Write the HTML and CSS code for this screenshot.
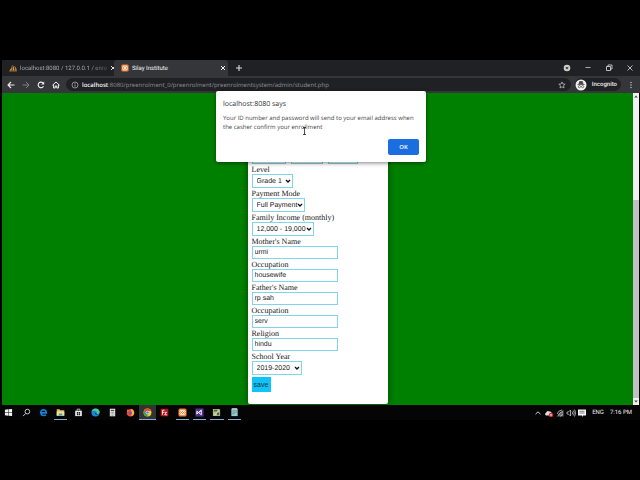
FILE: index.html
```html
<!DOCTYPE html>
<html lang="en">
<head>
<meta charset="utf-8">
<title>Silay Institute</title>
<link rel="stylesheet" href="styles.css">
</head>
<body>
<svg class="defs" aria-hidden="true">
  <symbol id="chev" viewBox="0 0 6 6"><path d="M1 2l2 2 2-2" fill="none" stroke="#111" stroke-width="1.3"/></symbol>
  <symbol id="xampp" viewBox="0 0 10 10"><rect x=".5" y=".5" width="9" height="9" rx="1.8" fill="#f07c30"/><path d="M3 3l4 4M7 3L3 7M2.6 5A1.4 1.4 0 0 1 3 2.6h4A1.4 1.4 0 0 1 7.4 5 1.4 1.4 0 0 1 7 7.4H3A1.4 1.4 0 0 1 2.6 5z" fill="none" stroke="#fff" stroke-width="1"/></symbol>
</svg>
<header class="tabs">
  <div class="tab">
    <svg class="fav" viewBox="0 0 10 10"><path d="M.5 8Q3.500 6 3.500 2V8zM4.500 8V1Q7 4 6.500 8z" fill="#e59a37"/><path d="M7.200 8Q8 5 7.200 3 9 5 9.500 8zM0 9q5-1 10 0" fill="#9b7a55" stroke="#b88a4c" stroke-width=".6"/></svg>
    <span class="name fade">localhost:8080 / 127.0.0.1 / enro</span>
    <button class="close" aria-label="Close tab"><svg viewBox="0 0 6 6"><path d="M1 1l4 4M5 1L1 5" stroke="#ddd"/></svg></button>
  </div>
  <div class="tab active">
    <svg class="fav"><use href="#xampp"/></svg>
    <span class="name">Silay Institute</span>
    <button class="close" aria-label="Close tab"><svg viewBox="0 0 6 6"><path d="M1 1l4 4M5 1L1 5" stroke="#eee"/></svg></button>
  </div>
  <button class="new" aria-label="New tab"><svg viewBox="0 0 8 8"><path d="M4 1v6M1 4h6" stroke="#ddd" stroke-width="1.100"/></svg></button>
  <div class="winctl">
    <button aria-label="Search tabs"><svg viewBox="0 0 8 8"><circle cx="4" cy="4" r="3.300" fill="#ccc"/><path d="M2.400 3.200h3.200L4 5.400z" fill="#222"/></svg></button>
    <button aria-label="Minimise"><svg viewBox="0 0 8 8"><path d="M1.500 3.500h5" stroke="#ccc" stroke-width=".8"/></svg></button>
    <button aria-label="Restore"><svg viewBox="0 0 8 8"><path d="M1.500 2.500h4v4h-4zM3 2.500V1h4v4H5.500" fill="none" stroke="#ddd" stroke-width=".8"/></svg></button>
    <button aria-label="Close"><svg viewBox="0 0 8 8"><path d="M1.500 1.500l5 5M6.500 1.500l-5 5" stroke="#ddd" stroke-width=".8"/></svg></button>
  </div>
</header>
<nav class="toolbar" aria-label="Browser">
  <button aria-label="Back"><svg viewBox="0 0 8 8"><path d="M7.500 4H1M4 1L1 4l3 3" fill="none" stroke="#eee" stroke-width="1.100"/></svg></button>
  <button aria-label="Forward"><svg viewBox="0 0 8 8"><path d="M.5 4H7M4 1l3 3-3 3" fill="none" stroke="#888" stroke-width=".9"/></svg></button>
  <button aria-label="Reload"><svg viewBox="0 0 8 8"><path d="M6.500 5.200A2.800 2.800 0 1 1 6 2" fill="none" stroke="#eee" stroke-width="1.100"/><path d="M7.200.6v3H4.200z" fill="#eee"/></svg></button>
  <button aria-label="Home"><svg viewBox="0 0 8 8"><path d="M.5 4.200L4 1l3.500 3.200M1.600 3.500V7H3.200V5h1.600v2h1.600V3.500" fill="none" stroke="#eee"/></svg></button>
  <div class="address">
    <svg viewBox="0 0 8 8"><circle cx="4" cy="4" r="3" fill="none" stroke="#bbb" stroke-width=".7"/><path d="M4 3.600v2M4 2.200v.8" stroke="#bbb" stroke-width=".8"/></svg>
    <span class="url"><b>localhost</b>:8080/preenrolment_0/preenrolment/preenrolmentsystem/admin/student.php</span>
    <svg viewBox="0 0 8 8"><path d="M4 .9l.9 2.100 2.300.2-1.700 1.500.5 2.300-2-1.200-2 1.200.5-2.300L.8 3.200l2.300-.2z" fill="none" stroke="#ccc" stroke-width=".7"/></svg>
  </div>
  <div class="incog">
    <svg viewBox="0 0 12 12"><circle cx="6" cy="6" r="5.500" fill="#f2f2f2"/><path d="M4 5l.6-2.500h2.800L8 5M2.500 5.500h7" fill="#444" stroke="#444" stroke-width=".8"/><circle cx="4.400" cy="7.600" r="1.100" fill="none" stroke="#444" stroke-width=".7"/><circle cx="7.600" cy="7.600" r="1.100" fill="none" stroke="#444" stroke-width=".7"/></svg>
    <span>Incognito</span>
  </div>
  <button aria-label="Menu"><svg viewBox="0 0 8 8" fill="#ccc"><circle cx="4" cy="1.500" r=".7"/><circle cx="4" cy="4" r=".7"/><circle cx="4" cy="6.500" r=".7"/></svg></button>
</nav>
<main class="view">
  <div class="page">
    <form class="card">
      <div class="birth">
        <span class="pick w34"><select aria-label="Month"><option></option></select></span>
        <span class="pick w32"><select aria-label="Day"><option></option></select></span>
        <span class="pick w30"><select aria-label="Year"><option></option></select></span>
      </div>
      <label for="level">Level</label>
      <span class="pick w41"><select id="level"><option>Grade 1</option></select><svg><use href="#chev"/></svg></span>
      <label for="mode">Payment Mode</label>
      <span class="pick w53"><select id="mode"><option>Full Payment</option></select><svg><use href="#chev"/></svg></span>
      <label for="income">Family Income (monthly)</label>
      <span class="pick w62"><select id="income"><option>12,000 - 19,000</option></select><svg><use href="#chev"/></svg></span>
      <label for="mother">Mother's Name</label>
      <input id="mother" value="urmi">
      <label for="mocc">Occupation</label>
      <input id="mocc" value="housewife">
      <label for="father">Father's Name</label>
      <input id="father" value="rp sah">
      <label for="focc">Occupation</label>
      <input id="focc" value="serv">
      <label for="religion">Religion</label>
      <input id="religion" value="hindu">
      <label for="year">School Year</label>
      <span class="pick w50"><select id="year"><option>2019-2020</option></select><svg><use href="#chev"/></svg></span>
      <button class="save" type="button">save</button>
    </form>
  </div>
  <div class="scroll"><svg viewBox="0 0 6 6"><path d="M1.200 4L3 2l1.800 2z" fill="#444"/></svg><div class="thumb"></div><svg viewBox="0 0 6 6"><path d="M1.200 2L3 4l1.800-2z" fill="#444"/></svg></div>
</main>
<footer class="taskbar">
  <div class="apps">
    <span><svg viewBox="0 0 10 10"><path d="M1 2l3.500-.5v3.200H1zM5 1.400L9 1v3.700H5zM1 5.200h3.500v3.300L1 8zM5 5.200h4V9l-4-.5z" fill="#f4f4f4"/></svg></span>
    <span><svg viewBox="0 0 10 10"><circle cx="6" cy="4" r="2.600" fill="none" stroke="#ddd"/><path d="M4.200 6L1.200 9" stroke="#ddd"/></svg></span>
    <span><svg viewBox="0 0 10 10"><path d="M2.200 5.400H8Q8 2 5 2 2 2.200 2 5.200 2.200 8.300 5.300 8.300q1.500 0 2.500-.7" fill="none" stroke="#1683dc" stroke-width="1.800"/></svg></span>
    <span class="open"><svg viewBox="0 0 10 10"><path d="M.8 1.500h3l1 1h4.400v6H.8z" fill="#e5bd57"/><path d="M.8 4h8.400v4.500H.8z" fill="#f7df94"/><path d="M3 6h4v2.500H3z" fill="#49a2ce"/></svg></span>
    <span><svg viewBox="0 0 10 10"><path d="M1.300 3h7.400v6H1.300z" fill="#eee"/><path d="M3.500 3V1.300h3V3" fill="none" stroke="#eee" stroke-width=".8"/><path d="M3.200 4.500h1.500V6H3.200zM5.300 4.500h1.500V6H5.300zM3.200 6.500h1.500V8H3.200zM5.300 6.500h1.500V8H5.300z" fill="#222"/></svg></span>
    <span><svg viewBox="0 0 10 10"><circle cx="5" cy="5" r="4.500" fill="#1688d2"/><path d="M.8 4Q2 .5 5.500.5 9.500 1 9.500 5q-.5 2-3 1.500Q7 3 4 3 2 3 .8 4" fill="#46cf91"/><path d="M4.500 5q-.5 2.500 4 2.500L6 6.500z" fill="#111"/></svg></span>
    <span><svg viewBox="0 0 10 10"><path d="M2 .8h6v8.400H2z" fill="#e8e8e8"/><path d="M3 2h4v1.500H3z" fill="#555"/><path d="M3 5h4M3 6.500h4M3 8h4" stroke="#777" stroke-width=".8" stroke-dasharray="1 .5"/></svg></span>
    <span><svg viewBox="0 0 10 10"><circle cx="5" cy="5.300" r="4.200" fill="#f04a34"/><path d="M6 .8Q9.500 3 9 6.500 8 9 5 9q2.500-2 1.500-4Q5 4 6 .8" fill="#ffb52f"/><path d="M1 1.500L3.500 3 1.500 4z" fill="#ff8a2b"/><circle cx="4.800" cy="5.500" r="1.800" fill="#7157bf"/></svg></span>
    <span class="open current"><svg viewBox="0 0 10 10"><circle cx="5" cy="5" r="4.400" fill="#f3c72c"/><path d="M1.200 2.800A4.400 4.400 0 0 1 9 3.200H5L3.200 6z" fill="#e04838"/><path d="M1.200 2.800L3.600 6.500h1.900L4.600 9.400A4.400 4.400 0 0 1 1.200 2.800" fill="#35a257"/><circle cx="5" cy="5" r="2" fill="#fff"/><circle cx="5" cy="5" r="1.500" fill="#4285e8"/></svg></span>
    <span><svg viewBox="0 0 10 10"><rect x=".8" y=".8" width="8.400" height="8.400" rx="1" fill="#b81920"/><path d="M2.700 7.500V2.500H5M2.700 4.800h1.800M5 4.800h2.300L5.200 7.500h2.500" fill="none" stroke="#fff" stroke-width=".9"/></svg></span>
    <span class="open"><svg><use href="#xampp"/></svg></span>
    <span class="open"><svg viewBox="0 0 10 10"><path d="M.5.500h9v9h-9z" fill="#54318f"/><path d="M2 3.500v3L7 2.500v5L2 3.500M2 6.500L7 2.500" fill="none" stroke="#fff" stroke-width="1"/></svg></span>
    <span class="open"><svg viewBox="0 0 10 10"><path d="M1 1h7l1 1v7H1z" fill="#aebd93"/><path d="M2 2h4v2H2zM5.500 5H8v3H5.500z" fill="#536542"/><path d="M3 8l4-5" stroke="#e7e3ae"/></svg></span>
    <span class="open"><svg viewBox="0 0 10 10"><path d="M1.500 1h7v8h-7z" fill="#9acbd0"/><path d="M2.500 3h5M2.500 4.700h5M2.500 6.400h3" stroke="#4d878f" stroke-width=".7"/><path d="M2 .8h6" stroke="#eee"/></svg></span>
  </div>
  <div class="tray">
    <svg viewBox="0 0 10 10"><path d="M2.500 6.200L5 3.800l2.500 2.400" fill="none" stroke="#ddd" stroke-width=".9"/></svg>
    <svg viewBox="0 0 10 10"><path d="M2 7.500Q0 6 2 4.700 3 2 5.500 3.500 8 3 8 7.500z" fill="#ddd"/><circle cx="7" cy="7" r="2.200" fill="#d92b36"/><path d="M6.200 6.200l1.600 1.600M7.800 6.200L6.200 7.800" stroke="#fff" stroke-width=".6"/></svg>
    <svg viewBox="0 0 10 10"><path d="M1.500 8.500h7v-7z" fill="#666"/><path d="M2 6a6 6 0 0 1 5-4M3.500 7.500A4 4 0 0 1 8 4M5.500 8.500A3 3 0 0 1 8 6.500" fill="none" stroke="#ccc" stroke-width=".8"/></svg>
    <svg viewBox="0 0 10 10"><path d="M1 4h1.500l2-2v6l-2-2H1zM6 3.500q1.200 1.500 0 3M7.300 2.500q2 2.500 0 5M8.500 1.500q2.500 3.500 0 7" fill="none" stroke="#ddd" stroke-width=".7"/></svg>
    <svg viewBox="0 0 10 10"><path d="M1 1.500h8v6H6L5 9.300V7.500H1z" fill="#f5f5f5"/><path d="M2.500 3.300h5M2.500 5h5" stroke="#555" stroke-width=".7"/></svg>
    <span class="lang">ENG</span><span class="clock">7:16 PM</span>
  </div>
</footer>
<div class="dialog" role="alertdialog" aria-labelledby="dt" aria-describedby="dm">
  <h1 id="dt">localhost:8080 says</h1>
  <p id="dm">Your ID number and password will send to your email address when the casher confirm your enrollment</p>
  <button type="button">OK</button>
  <svg class="cursor" viewBox="0 0 5 8"><path d="M1 .5h3M1 7.500h3M2.500.5v7" stroke="#222" stroke-width=".8"/></svg>
</div>
</body>
</html>
```
FILE: styles.css
```css
* { box-sizing: border-box; }
body {
  margin: 0;
  height: 100vh;
  padding: 60px 0;
  display: flex;
  flex-direction: column;
  background: #000;
  position: relative;
  overflow: hidden;
  font-family: Roboto, "Open Sans", sans-serif;
  font-size: 6px;
  text-rendering: geometricPrecision;
}
.defs { position: absolute; width: 0; height: 0; }
button { border: 0; padding: 0; background: none; font: inherit; display: grid; place-items: center; }
svg { display: block; flex: none; }

.tabs { height: 16px; flex: none; display: flex; background: #202124; color: #a4a7ab; margin-left: 2px; }
.tab { width: 112px; display: flex; align-items: center; gap: 3px; padding: 0 2px 0 7px; }
.tab.active { width: 114px; background: #35363a; color: #f4f4f4; border-radius: 3px 3px 0 0; }
.fav { width: 8px; height: 8px; }
.name { white-space: nowrap; }
.fade { mask-image: linear-gradient(90deg, #000 80%, rgba(0, 0, 0, .3)); }
.close, .close svg { width: 6px; height: 6px; }
.close { margin-left: auto; }
.new { width: 22px; }
.new svg, .winctl svg { width: 8px; height: 8px; }
.winctl { margin-left: auto; display: flex; }
.winctl button { width: 21px; }

.toolbar { height: 17px; flex: none; display: flex; align-items: center; background: #35363a; margin-left: 2px; padding-left: 1px; }
.toolbar > button { width: 15px; }
.toolbar svg { width: 8px; height: 8px; }
.address { flex: 1; height: 13px; display: flex; align-items: center; gap: 3px; padding: 0 5px; margin-left: 3px; border-radius: 7px; background: #202124; }
.url { flex: 1; color: #8d9094; font-family: "Open Sans", sans-serif; white-space: nowrap; }
.url b { color: #f4f4f4; font-weight: 600; }
.incog { height: 13px; display: flex; align-items: center; gap: 5px; padding-right: 4px; margin-left: 4px; border-radius: 7px; background: #202124; color: #eee; }
.toolbar .incog svg { width: 12px; height: 12px; }
.incog span { font-weight: 500; }
.toolbar > button:last-child { width: 19px; }

.view { flex: 1; min-height: 0; display: flex; margin-left: 2px; }
.page { flex: 1; min-width: 0; background: #008000; display: flex; flex-direction: column; align-items: center; justify-content: flex-end; overflow: hidden; padding-bottom: 1px; }
.card {
  width: 140px;
  min-height: 100%;
  display: flex;
  flex-direction: column;
  align-items: flex-start;
  justify-content: flex-end;
  padding: 0 4px 12px;
  background: #fff;
  border-radius: 2px;
  box-shadow: 0 0 6px rgba(0, 0, 0, .5);
  font-family: "Liberation Sans", sans-serif;
}
.card label { height: 10px; font: 8px/12px "Liberation Serif", serif; color: #222; }
.birth { display: flex; gap: 5px; }
.pick { height: 14px; display: flex; position: relative; }
.pick select, .card input { appearance: none; width: 100%; margin: 0; border: 1px solid #7fd6e8; border-radius: 0; background: #fff; color: #222; font: 7px/11px "Liberation Sans", sans-serif; text-rendering: geometricPrecision; }
.pick select { padding: 0 4px; }
.pick svg { position: absolute; right: 2px; top: 4px; width: 6px; height: 6px; }
.w30 { width: 30px; }
.w32 { width: 32px; }
.w34 { width: 34px; }
.w41 { width: 41px; }
.w50 { width: 50px; }
.w53 { width: 53px; }
.w62 { width: 62px; }
.card input { width: 86px; height: 13px; padding: 0 2px; }
.save { width: 19px; height: 15px; margin-top: 2px; background: #10c4fa; color: #15323c; font-size: 7px; }
.scroll { width: 6px; margin-right: 1px; display: flex; flex-direction: column; background: #f1f1f1; }
.scroll svg { width: 6px; height: 7px; }
.thumb { flex: 1; margin: 100px 0 0; background: #c1c1c1; }

.taskbar { height: 15px; flex: none; display: flex; justify-content: space-between; background: #050505; color: #eee; }
.apps { width: 243px; display: grid; grid-template-columns: repeat(14, 1fr); }
.apps span { display: grid; place-items: center; border-bottom: 1px solid transparent; }
.apps .open { border-color: #7caed6; margin: 0 2px; }
.apps .current { background: #333; margin: 0; }
.apps svg { width: 9px; height: 9px; }
.tray { display: flex; align-items: center; gap: 1px; padding-right: 8px; }
.tray svg { width: 10px; height: 10px; }
.lang { margin-left: 4px; }
.clock { margin-left: 5px; }

.dialog {
  position: absolute;
  top: 91px;
  left: 50%;
  width: 210px;
  margin-left: -104px;
  padding: 8px 7px 7px;
  display: flex;
  flex-direction: column;
  background: #fff;
  color: #444;
  border-radius: 2px;
  box-shadow: 0 1px 4px rgba(0, 0, 0, .5);
  font-family: "Open Sans", sans-serif;
}
.dialog h1 { margin: 0 0 4px; font-size: 7px; line-height: 11px; font-weight: 400; color: #333; }
.dialog p { margin: 0; font-size: 6px; line-height: 9px; }
.dialog button { align-self: flex-end; width: 31px; height: 16px; margin-top: 7px; background: #1a6ee0; color: #fff; border-radius: 2px; font-weight: 600; }
.cursor { position: absolute; left: 86px; top: 36px; width: 5px; height: 8px; }
```
